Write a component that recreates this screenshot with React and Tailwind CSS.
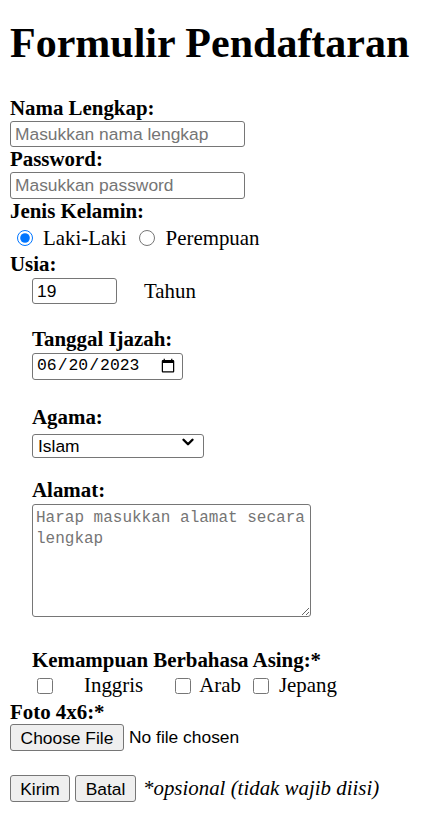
import { ChevronDown } from "lucide-react";

const serif = "font-['Liberation_Serif','Times_New_Roman',serif]";
const sans = "font-['Liberation_Sans',Arial,sans-serif]";
const mono = "font-['Liberation_Mono','Courier_New',monospace]";

const Label = ({ children, indent, className = "" }) => (
  <div className={`${serif} text-[20.9px] leading-[23px] font-bold text-black ${indent ? "ml-[22px]" : ""} ${className}`}>
    {children}
  </div>
);

const field =
  "border border-[#767676] rounded-[3px] bg-white text-black outline-none placeholder:text-[#757575]";

const GreyButton = ({ children, className = "" }) => (
  <button
    type="button"
    className={`${sans} text-[17.4px] h-[27px] px-[9px] border border-[#767676] rounded-[3px] bg-[#efefef] text-black ${className}`}
  >
    {children}
  </button>
);

export default function App() {
  return (
    <div className={`min-h-screen bg-white pl-[10px] ${serif} text-[20.9px] text-black`}>
      {/* Judul */}
      <h1 className="pt-[20px] text-[42px] leading-[47px] font-bold">Formulir Pendaftaran</h1>

      <form className="mt-[30px]">
        <Label>Nama Lengkap:</Label>
        <input
          type="text"
          placeholder="Masukkan nama lengkap"
          className={`${field} ${sans} block mt-[1px] mb-[1px] w-[235px] h-[26px] px-[4px] text-[17.4px]`}
        />

        <Label>Password:</Label>
        <input
          type="password"
          placeholder="Masukkan password"
          className={`${field} ${sans} block mt-[1px] mb-[1px] w-[235px] h-[27px] px-[4px] text-[17.4px]`}
        />

        <Label>Jenis Kelamin:</Label>
        <div className="flex items-center h-[30px] leading-[23px]">
          <input type="radio" name="jk" defaultChecked className="w-4 h-4 ml-[7px] accent-[#0075ff]" />
          <span className="ml-[10px]">Laki-Laki</span>
          <input type="radio" name="jk" className="w-4 h-4 ml-[12px]" />
          <span className="ml-[11px]">Perempuan</span>
        </div>

        <Label>Usia:</Label>
        <div className="flex items-center h-[26px] mt-[2px] leading-[23px]">
          <input
            type="number"
            defaultValue="19"
            className={`${field} ${sans} ml-[22px] w-[85px] h-[26px] px-[4px] text-[17.4px]`}
          />
          <span className="ml-[27px]">Tahun</span>
        </div>

        <Label indent className="mt-[24px]">Tanggal Ijazah:</Label>
        <input
          type="date"
          defaultValue="2023-06-20"
          className={`${field} ${mono} block ml-[22px] mt-[2px] w-[151px] h-[27px] pl-[3px] pr-[4px] text-[16.4px]`}
        />

        <Label indent className="mt-[26px]">Agama:</Label>
        <div className="relative ml-[22px] mt-[1px] w-[172px] h-[24px]">
          <select
            defaultValue="Islam"
            className={`${field} ${sans} appearance-none w-full h-full pl-[5px] text-[17.4px] leading-[20px]`}
          >
            <option>Islam</option>
            <option>Kristen</option>
            <option>Katolik</option>
            <option>Hindu</option>
            <option>Buddha</option>
            <option>Konghucu</option>
          </select>
          <ChevronDown
            size={18}
            strokeWidth={3.2}
            className="pointer-events-none absolute right-[7px] top-[3px] text-black"
          />
        </div>

        <Label indent className="mt-[25px]">Alamat:</Label>
        <textarea
          placeholder="Harap masukkan alamat secara lengkap"
          className={`${field} ${mono} block resize ml-[22px] mt-[2px] w-[279px] h-[113px] px-[3px] py-[3px] text-[16px] leading-[21px]`}
        />

        <Label indent className="mt-[32px]">Kemampuan Berbahasa Asing:*</Label>
        <div className="flex items-center h-[27px] leading-[23px]">
          <input type="checkbox" className="w-4 h-4 ml-[27px]" />
          <span className="ml-[31px]">Inggris</span>
          <input type="checkbox" className="w-4 h-4 ml-[32px]" />
          <span className="ml-[8px]">Arab</span>
          <input type="checkbox" className="w-4 h-4 ml-[12px]" />
          <span className="ml-[10px]">Jepang</span>
        </div>

        <Label className="mt-[2px]">Foto 4x6:*</Label>
        <div className={`flex items-center h-[26px] ${sans} text-[17.4px]`}>
          <GreyButton className="w-[114px] h-[26px] px-0">Choose File</GreyButton>
          <span className="ml-[5px]">No file chosen</span>
        </div>

        <div className="flex items-center mt-[25px] h-[27px]">
          <GreyButton className="w-[60px] px-0">Kirim</GreyButton>
          <GreyButton className="w-[61px] px-0 ml-[5px]">Batal</GreyButton>
          <span className="ml-[7px] italic leading-[23px]">*opsional (tidak wajib diisi)</span>
        </div>
      </form>
    </div>
  );
}
